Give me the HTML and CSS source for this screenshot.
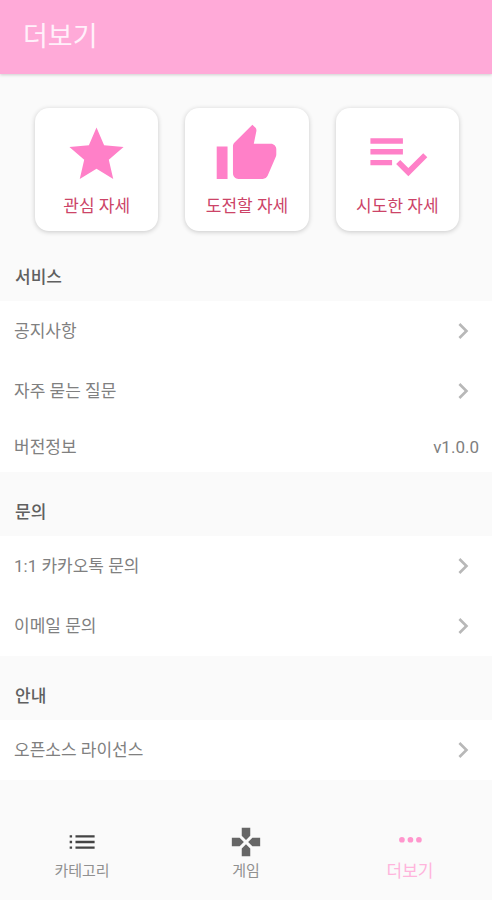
FILE: index.html
```html
<!DOCTYPE html>
<html lang="ko">
<head>
<meta charset="utf-8">
<meta name="viewport" content="width=device-width, initial-scale=1">
<title>더보기</title>
<link rel="stylesheet" href="styles.css">
</head>
<body>
<header class="app-bar"><h1 class="app-title">더보기</h1></header>
<main class="content">
  <div class="cards">
    <button class="card" type="button">
      <svg class="card-icon" viewBox="0 0 24 24" aria-hidden="true"><path d="M12 17.27 18.18 21l-1.64-7.03L22 9.24l-7.19-.61L12 2 9.19 8.63 2 9.24l5.46 4.73L5.82 21z"/></svg>
      <span>관심 자세</span>
    </button>
    <button class="card" type="button">
      <svg class="card-icon" viewBox="0 0 24 24" aria-hidden="true"><path d="M1 21h4V9H1v12zm22-11c0-1.1-.9-2-2-2h-6.31l.95-4.57.03-.32c0-.41-.17-.79-.44-1.06L14.17 1 7.59 7.59C7.22 7.95 7 8.45 7 9v10c0 1.1.9 2 2 2h9c.83 0 1.54-.5 1.84-1.22l3.02-7.05c.09-.23.14-.47.14-.73v-2z"/></svg>
      <span>도전할 자세</span>
    </button>
    <button class="card" type="button">
      <svg class="card-icon" viewBox="0 0 24 24" aria-hidden="true"><path d="M14 10H2v2h12v-2zm0-4H2v2h12V6zM2 16h8v-2H2v2zm19.5-4.5L23 13l-6.99 7-4.51-4.5L13 14l3.01 3 5.49-5.5z"/></svg>
      <span>시도한 자세</span>
    </button>
  </div>

  <section>
    <h2 class="section-title">서비스</h2>
    <div class="list">
      <a class="row" href="#notice">공지사항<svg class="chevron" viewBox="0 0 24 24" aria-hidden="true"><path d="M10 6 8.59 7.41 13.17 12l-4.58 4.59L10 18l6-6z"/></svg></a>
      <a class="row" href="#faq">자주 묻는 질문<svg class="chevron" viewBox="0 0 24 24" aria-hidden="true"><path d="M10 6 8.59 7.41 13.17 12l-4.58 4.59L10 18l6-6z"/></svg></a>
      <div class="row row-info"><span>버전정보</span><span>v1.0.0</span></div>
    </div>
  </section>

  <section>
    <h2 class="section-title">문의</h2>
    <div class="list">
      <a class="row" href="#kakao">1:1 카카오톡 문의<svg class="chevron" viewBox="0 0 24 24" aria-hidden="true"><path d="M10 6 8.59 7.41 13.17 12l-4.58 4.59L10 18l6-6z"/></svg></a>
      <a class="row" href="#email">이메일 문의<svg class="chevron" viewBox="0 0 24 24" aria-hidden="true"><path d="M10 6 8.59 7.41 13.17 12l-4.58 4.59L10 18l6-6z"/></svg></a>
    </div>
  </section>

  <section>
    <h2 class="section-title">안내</h2>
    <div class="list">
      <a class="row" href="#license">오픈소스 라이선스<svg class="chevron" viewBox="0 0 24 24" aria-hidden="true"><path d="M10 6 8.59 7.41 13.17 12l-4.58 4.59L10 18l6-6z"/></svg></a>
    </div>
  </section>
</main>
<nav class="tabs">
  <a class="tab" href="#category">
    <svg class="tab-icon tab-icon-dark" viewBox="0 0 24 24" aria-hidden="true"><path d="M3.3 7.3h1.7v1.6H3.3zm0 3.9h1.7v1.6H3.3zm0 3.9h1.7v1.6H3.3zM7.4 7.3h13.500v1.6H7.4zm0 3.9h13.500v1.6H7.4zm0 3.9h13.500v1.6H7.4z"/></svg>
    <span>카테고리</span>
  </a>
  <a class="tab" href="#game">
    <svg class="tab-icon" viewBox="0 0 24 24" aria-hidden="true"><path d="M15 7.5V2H9v5.5l3 3 3-3zM7.5 9H2v6h5.5l3-3-3-3zM9 16.5V22h6v-5.5l-3-3-3 3zM16.5 9l-3 3 3 3H22V9h-5.5z"/></svg>
    <span>게임</span>
  </a>
  <a class="tab tab-active" href="#more" aria-current="page">
    <svg class="tab-icon" viewBox="0 0 24 24" aria-hidden="true"><circle cx="6.3" cy="10.4" r="2"/><circle cx="12.3" cy="10.4" r="2"/><circle cx="18.3" cy="10.4" r="2"/></svg>
    <span>더보기</span>
  </a>
</nav>
</body>
</html>
```
FILE: styles.css
```css
* {
  box-sizing: border-box;
}

body {
  margin: 0;
  min-height: 100vh;
  display: flex;
  flex-direction: column;
  background: #fafafa;
  color: #808080;
  font-family: Roboto, "Noto Sans CJK KR", sans-serif;
  font-size: 17px;
  line-height: 24px;
}

a {
  color: inherit;
  text-decoration: none;
}

svg {
  display: block;
  fill: currentColor;
}

.app-bar {
  padding: 17px 23px;
  background: #ffaad8;
  box-shadow: 0 1px 3px rgba(0, 0, 0, 0.18);
}

.app-title {
  margin: 0;
  color: #fff0fa;
  font-size: 27px;
  font-weight: 400;
  line-height: 40px;
}

.content {
  flex: 1;
}

.cards {
  display: grid;
  grid-template-columns: repeat(3, 1fr);
  gap: 27px;
  padding: 34px 33px 6px 35px;
}

.card {
  display: flex;
  flex-direction: column;
  align-items: center;
  gap: 7px;
  padding: 14px 0 13px;
  border: 0;
  border-radius: 14px;
  background: #fff;
  box-shadow: 0 1px 5px rgba(0, 0, 0, 0.2);
  color: #cc4468;
  font: inherit;
}

.card-icon {
  width: 65px;
  height: 65px;
  color: #ff80c8;
}

.section-title {
  margin: 0;
  padding: 28px 15px 12px;
  color: #606060;
  font-size: 17px;
  font-weight: 500;
  line-height: 24px;
}

.list {
  background: #fff;
}

.row {
  display: flex;
  align-items: center;
  justify-content: space-between;
  min-height: 60px;
  padding: 0 13px 0 14px;
}

.row-info {
  min-height: 51px;
}

.chevron {
  width: 32px;
  height: 32px;
  color: #b8b8b8;
}

.tabs {
  display: grid;
  grid-template-columns: repeat(3, 1fr);
  padding: 0 0 17px;
}

.tab {
  display: flex;
  flex-direction: column;
  align-items: center;
  color: #909090;
  font-size: 15px;
}

.tab-icon {
  width: 34px;
  height: 34px;
  color: #666;
}

.tab-icon-dark {
  color: #444;
}

.tab-active {
  color: #ffb4dc;
  font-size: 17px;
}

.tab-active .tab-icon {
  color: #ff96cd;
}
```
